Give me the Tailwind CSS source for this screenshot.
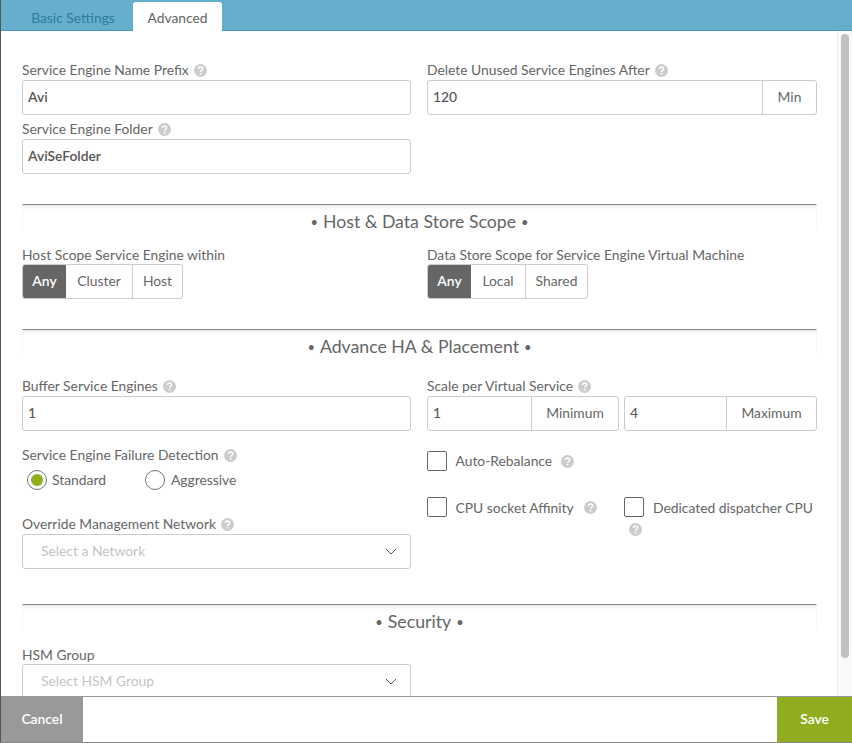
<!DOCTYPE html>
<html lang="en">
<head>
<meta charset="UTF-8">
<title>Service Engine Group - Advanced</title>
<script src="https://cdn.jsdelivr.net/npm/@tailwindcss/browser@4"></script>
</head>
<body class="bg-white">
<div class="w-[852px] h-[743px] flex flex-col overflow-hidden border-l border-l-[#555] border-b border-b-[#888] font-['Lato',sans-serif] text-[13.85px] text-[#666]">
  <!-- tabs -->
  <div class="h-[31px] shrink-0 bg-[#66afcc] border-b border-b-[#4b97b8] flex items-end pl-[21px]">
    <div class="w-[111px] h-[30px] pt-[6px] pr-[9px] flex items-center justify-center text-[#2f7c9c]">Basic Settings</div>
    <div class="w-[89px] h-[29px] mb-[-1px] pt-[4px] bg-white rounded-t-[3px] flex items-center justify-center text-[#666]">Advanced</div>
  </div>

  <div class="flex-1 min-h-0 flex overflow-hidden">
    <div class="w-[836px] shrink-0 pl-[21px] pt-[29px] overflow-hidden">
      <!-- general -->
      <div class="grid grid-cols-[389px_390px] gap-x-[16px]">
        <div>
          <div class="h-5 flex items-center gap-[5px]">Service Engine Name Prefix
            <svg class="w-[13px] h-[13px]" viewBox="0 0 14 14"><circle cx="7" cy="7" r="7" fill="#ccc"/><path d="M4.8 5.4c0-1.3 1-2.1 2.3-2.1s2.2.8 2.2 1.9c0 1.6-2.2 1.6-2.2 3.2" fill="none" stroke="#fff" stroke-width="1.6"/><circle cx="7.1" cy="10.5" r="1" fill="#fff"/></svg>
          </div>
          <div class="h-[35px] border border-[#ccc] rounded-[3px] px-[5px] flex items-center font-semibold text-[#555]">Avi</div>
          <div class="h-5 mt-1 flex items-center gap-[5px]">Service Engine Folder
            <svg class="w-[13px] h-[13px]" viewBox="0 0 14 14"><circle cx="7" cy="7" r="7" fill="#ccc"/><path d="M4.8 5.4c0-1.3 1-2.1 2.3-2.1s2.2.8 2.2 1.9c0 1.6-2.2 1.6-2.2 3.2" fill="none" stroke="#fff" stroke-width="1.6"/><circle cx="7.1" cy="10.5" r="1" fill="#fff"/></svg>
          </div>
          <div class="h-[35px] border border-[#ccc] rounded-[3px] px-[5px] flex items-center font-semibold text-[#555]">AviSeFolder</div>
        </div>
        <div>
          <div class="h-5 flex items-center gap-[5px]">Delete Unused Service Engines After
            <svg class="w-[13px] h-[13px]" viewBox="0 0 14 14"><circle cx="7" cy="7" r="7" fill="#ccc"/><path d="M4.8 5.4c0-1.3 1-2.1 2.3-2.1s2.2.8 2.2 1.9c0 1.6-2.2 1.6-2.2 3.2" fill="none" stroke="#fff" stroke-width="1.6"/><circle cx="7.1" cy="10.5" r="1" fill="#fff"/></svg>
          </div>
          <div class="h-[35px] border border-[#ccc] rounded-[3px] flex items-center">
            <div class="flex-1 px-[5px] text-[#555] font-medium">120</div>
            <div class="w-[54px] h-full border-l border-l-[#ccc] flex items-center justify-center">Min</div>
          </div>
        </div>
      </div>

      <!-- host and data store scope -->
      <div class="mt-[30px] w-[795px] h-[26px] border-t border-t-[#888] border-x border-x-[#f6f6f6] shadow-[inset_0_5px_5px_-5px_rgba(0,0,0,0.2)] flex items-center justify-center gap-[5px] text-[17.7px] pt-[10px]"><span class="text-[13px]">•</span>Host &amp; Data Store Scope<span class="text-[13px]">•</span></div>
      <div class="mt-[14px] grid grid-cols-[389px_390px] gap-x-[16px]">
        <div>
          <div class="h-5 pt-[2px] flex items-center">Host Scope Service Engine within</div>
          <div class="flex w-fit h-[35px] border border-[#ccc] rounded-[3px] overflow-hidden">
            <div class="w-[43px] bg-[#666] text-white font-semibold flex items-center justify-center">Any</div>
            <div class="w-[67px] border-r border-r-[#ccc] flex items-center justify-center">Cluster</div>
            <div class="w-[49px] flex items-center justify-center">Host</div>
          </div>
        </div>
        <div>
          <div class="h-5 pt-[2px] flex items-center">Data Store Scope for Service Engine Virtual Machine</div>
          <div class="flex w-fit h-[35px] border border-[#ccc] rounded-[3px] overflow-hidden">
            <div class="w-[43px] bg-[#666] text-white font-semibold flex items-center justify-center">Any</div>
            <div class="w-[55px] border-r border-r-[#ccc] flex items-center justify-center">Local</div>
            <div class="w-[61px] flex items-center justify-center">Shared</div>
          </div>
        </div>
      </div>

      <!-- advance ha and placement -->
      <div class="mt-[30px] w-[795px] h-[26px] border-t border-t-[#888] border-x border-x-[#f6f6f6] shadow-[inset_0_5px_5px_-5px_rgba(0,0,0,0.2)] flex items-center justify-center gap-[5px] text-[17.7px] pt-[10px]"><span class="text-[13px]">•</span>Advance HA &amp; Placement<span class="text-[13px]">•</span></div>
      <div class="mt-[21px] grid grid-cols-[389px_390px] gap-x-[16px]">
        <div>
          <div class="h-5 flex items-center gap-[5px]">Buffer Service Engines
            <svg class="w-[13px] h-[13px]" viewBox="0 0 14 14"><circle cx="7" cy="7" r="7" fill="#ccc"/><path d="M4.8 5.4c0-1.3 1-2.1 2.3-2.1s2.2.8 2.2 1.9c0 1.6-2.2 1.6-2.2 3.2" fill="none" stroke="#fff" stroke-width="1.6"/><circle cx="7.1" cy="10.5" r="1" fill="#fff"/></svg>
          </div>
          <div class="h-[35px] border border-[#ccc] rounded-[3px] px-[5px] flex items-center text-[#555] font-medium">1</div>
          <div class="h-5 mt-[14px] flex items-center gap-[5px]">Service Engine Failure Detection
            <svg class="w-[13px] h-[13px]" viewBox="0 0 14 14"><circle cx="7" cy="7" r="7" fill="#ccc"/><path d="M4.8 5.4c0-1.3 1-2.1 2.3-2.1s2.2.8 2.2 1.9c0 1.6-2.2 1.6-2.2 3.2" fill="none" stroke="#fff" stroke-width="1.6"/><circle cx="7.1" cy="10.5" r="1" fill="#fff"/></svg>
          </div>
          <div class="h-5 mt-[5px] flex items-center pl-[5px]">
            <div class="w-5 h-5 rounded-full border border-[#777] flex items-center justify-center"><div class="w-[12px] h-[12px] rounded-full bg-[#8fad1f]"></div></div>
            <div class="ml-[5px] w-[93px]">Standard</div>
            <div class="w-5 h-5 rounded-full border border-[#777]"></div>
            <div class="ml-[6px]">Aggressive</div>
          </div>
          <div class="h-5 mt-[24px] flex items-center gap-[5px]">Override Management Network
            <svg class="w-[13px] h-[13px]" viewBox="0 0 14 14"><circle cx="7" cy="7" r="7" fill="#ccc"/><path d="M4.8 5.4c0-1.3 1-2.1 2.3-2.1s2.2.8 2.2 1.9c0 1.6-2.2 1.6-2.2 3.2" fill="none" stroke="#fff" stroke-width="1.6"/><circle cx="7.1" cy="10.5" r="1" fill="#fff"/></svg>
          </div>
          <div class="h-[35px] border border-[#ccc] rounded-[3px] pl-[18px] pr-[13px] flex items-center justify-between text-[#c4c4c4]">Select a Network
            <svg class="w-[12px] h-[7px]" viewBox="0 0 12 7"><path d="M1 1l5 5 5-5" fill="none" stroke="#555" stroke-width="1"/></svg>
          </div>
        </div>
        <div>
          <div class="h-5 flex items-center gap-[5px]">Scale per Virtual Service
            <svg class="w-[13px] h-[13px]" viewBox="0 0 14 14"><circle cx="7" cy="7" r="7" fill="#ccc"/><path d="M4.8 5.4c0-1.3 1-2.1 2.3-2.1s2.2.8 2.2 1.9c0 1.6-2.2 1.6-2.2 3.2" fill="none" stroke="#fff" stroke-width="1.6"/><circle cx="7.1" cy="10.5" r="1" fill="#fff"/></svg>
          </div>
          <div class="flex gap-[5px]">
            <div class="w-[192px] h-[35px] border border-[#ccc] rounded-[3px] flex items-center">
              <div class="flex-1 px-[5px] text-[#555] font-medium">1</div>
              <div class="w-[87px] h-full border-l border-l-[#ccc] flex items-center justify-center">Minimum</div>
            </div>
            <div class="w-[193px] h-[35px] border border-[#ccc] rounded-[3px] flex items-center">
              <div class="flex-1 px-[5px] text-[#555] font-medium">4</div>
              <div class="w-[90px] h-full border-l border-l-[#ccc] flex items-center justify-center">Maximum</div>
            </div>
          </div>
          <div class="mt-[20px] h-5 flex items-center">
            <div class="w-5 h-5 border border-[#666] rounded-[2px]"></div>
            <div class="ml-[8.5px]">Auto-Rebalance</div>
            <svg class="w-[13px] h-[13px] ml-[9px]" viewBox="0 0 14 14"><circle cx="7" cy="7" r="7" fill="#ccc"/><path d="M4.8 5.4c0-1.3 1-2.1 2.3-2.1s2.2.8 2.2 1.9c0 1.6-2.2 1.6-2.2 3.2" fill="none" stroke="#fff" stroke-width="1.6"/><circle cx="7.1" cy="10.5" r="1" fill="#fff"/></svg>
          </div>
          <div class="mt-[26px] flex">
            <div class="w-[197px] h-5 flex items-center">
              <div class="w-5 h-5 border border-[#666] rounded-[2px]"></div>
              <div class="ml-[8.5px] pt-[2px]">CPU socket Affinity</div>
              <svg class="w-[13px] h-[13px] ml-[10px]" viewBox="0 0 14 14"><circle cx="7" cy="7" r="7" fill="#ccc"/><path d="M4.8 5.4c0-1.3 1-2.1 2.3-2.1s2.2.8 2.2 1.9c0 1.6-2.2 1.6-2.2 3.2" fill="none" stroke="#fff" stroke-width="1.6"/><circle cx="7.1" cy="10.5" r="1" fill="#fff"/></svg>
            </div>
            <div>
              <div class="h-5 flex items-center">
                <div class="w-5 h-5 border border-[#666] rounded-[2px]"></div>
                <div class="ml-[9px] pt-[2px]">Dedicated dispatcher CPU</div>
              </div>
              <svg class="w-[13px] h-[13px] ml-[5px] mt-[6px]" viewBox="0 0 14 14"><circle cx="7" cy="7" r="7" fill="#ccc"/><path d="M4.8 5.4c0-1.3 1-2.1 2.3-2.1s2.2.8 2.2 1.9c0 1.6-2.2 1.6-2.2 3.2" fill="none" stroke="#fff" stroke-width="1.6"/><circle cx="7.1" cy="10.5" r="1" fill="#fff"/></svg>
            </div>
          </div>
        </div>
      </div>

      <!-- security -->
      <div class="mt-[35px] w-[795px] h-[26px] border-t border-t-[#888] border-x border-x-[#f6f6f6] shadow-[inset_0_5px_5px_-5px_rgba(0,0,0,0.2)] flex items-center justify-center gap-[5px] text-[17.7px] pt-[10px]"><span class="text-[13px]">•</span>Security<span class="text-[13px]">•</span></div>
      <div class="mt-[15px] w-[389px]">
        <div class="h-5 flex items-center">HSM Group</div>
        <div class="h-[35px] mt-[-1px] border border-[#ccc] rounded-[3px] pl-[18px] pr-[13px] flex items-center justify-between text-[#c4c4c4]">Select HSM Group
          <svg class="w-[12px] h-[7px]" viewBox="0 0 12 7"><path d="M1 1l5 5 5-5" fill="none" stroke="#555" stroke-width="1"/></svg>
        </div>
      </div>
    </div>
    <!-- scrollbar -->
    <div class="flex-1 border-l border-l-[#ececec] bg-[#fafafa] pt-[3px] pl-[3px]">
      <div class="w-[8px] h-[624px] rounded-full bg-[#c1c1c1]"></div>
    </div>
  </div>

  <!-- footer -->
  <div class="h-[46px] shrink-0 border-t border-t-[#999] flex justify-between bg-white">
    <div class="w-[82px] bg-[#999] text-white font-semibold flex items-center justify-center">Cancel</div>
    <div class="w-[75px] bg-[#8fad1f] text-white font-semibold flex items-center justify-center">Save</div>
  </div>
</div>
</body>
</html>
